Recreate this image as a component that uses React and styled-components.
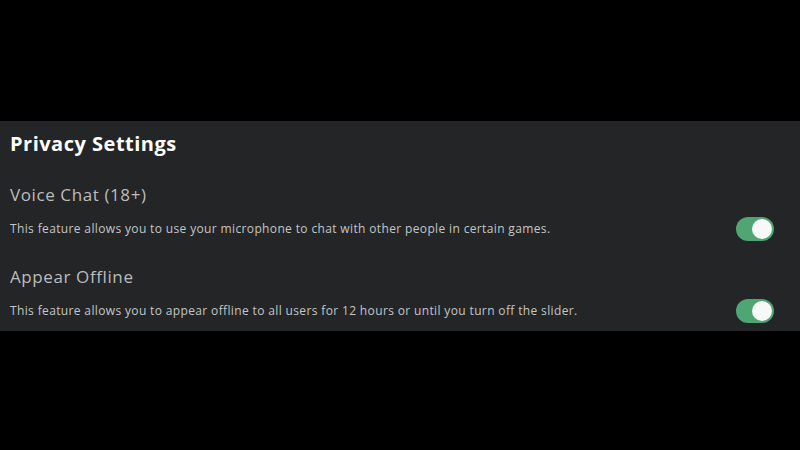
import React, { useState } from 'react';
import styled, { createGlobalStyle } from 'styled-components';

const Global = createGlobalStyle`
  html, body {
    margin: 0;
    background: #000;
  }
  #root {
    width: 800px;
    height: 450px;
    background: #000;
  }
`;

const Page = styled.div`
  padding-top: 121px;
  font-family: 'Open Sans', 'Noto Sans', sans-serif;
`;

const Panel = styled.section`
  background: #232527;
  height: 210px;
  box-sizing: border-box;
  padding: 11px 26px 0 10px;
`;

const Title = styled.h1`
  margin: 0;
  font-size: 20px;
  font-weight: 700;
  letter-spacing: 0.5px;
  color: #ffffff;
  line-height: 24px;
`;

const Setting = styled.div`
  margin-top: ${p => p.$first ? 28 : 25}px;
`;

const Label = styled.h2`
  margin: 0;
  font-size: 17px;
  font-weight: 500;
  letter-spacing: 0.6px;
  color: #bcbdbe;
  line-height: 22px;
`;

const Row = styled.div`
  display: flex;
  justify-content: space-between;
  align-items: center;
  margin-top: 11px;
`;

const Desc = styled.p`
  margin: 0;
  font-size: 12px;
  letter-spacing: 0.36px;
  color: #c4c5c6;
  line-height: 16px;
`;

const Toggle = styled.button`
  width: 38px;
  height: 24px;
  border-radius: 12px;
  border: none;
  padding: 2px;
  background: ${p => p.$on ? '#4fa673' : '#5a5d60'};
  display: flex;
  justify-content: ${p => p.$on ? 'flex-end' : 'flex-start'};
  align-items: center;
  cursor: pointer;
  flex-shrink: 0;
`;

const Knob = styled.span`
  width: 20px;
  height: 20px;
  border-radius: 50%;
  background: #f7f9f8;
`;

const settings = [
  { title: 'Voice Chat (18+)', text: 'This feature allows you to use your microphone to chat with other people in certain games.' },
  { title: 'Appear Offline', text: 'This feature allows you to appear offline to all users for 12 hours or until you turn off the slider.' },
];

export default function App() {
  const [on, setOn] = useState([true, true]);
  return (
    <Page>
      <Global />
      <Panel>
        <Title>Privacy Settings</Title>
        {settings.map((s, i) => (
          <Setting key={s.title} $first={i === 0}>
            <Label>{s.title}</Label>
            <Row>
              <Desc>{s.text}</Desc>
              <Toggle $on={on[i]} onClick={() => setOn(on.map((v, j) => j === i ? !v : v))}>
                <Knob />
              </Toggle>
            </Row>
          </Setting>
        ))}
      </Panel>
    </Page>
  );
}
